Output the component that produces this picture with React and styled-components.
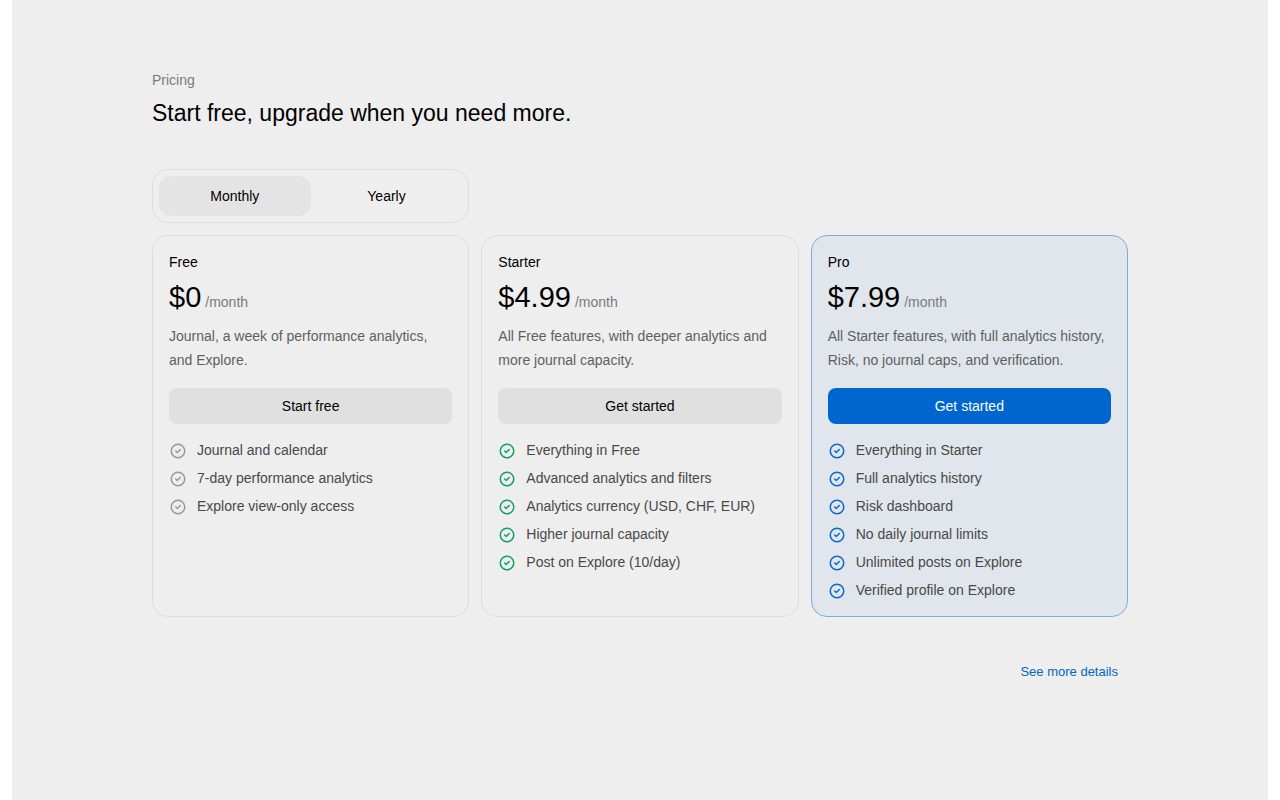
import { useState } from 'react';
import styled, { createGlobalStyle } from 'styled-components';

const GlobalStyle = createGlobalStyle`
  * {
    box-sizing: border-box;
  }

  body {
    margin: 0;
    background: #ffffff;
    color: #000000;
    font-family: "Liberation Sans", Arial, sans-serif;
    font-size: 14px;
    line-height: 20px;
  }

  h1, h2, p, ul {
    margin: 0;
    padding: 0;
    font-weight: 400;
  }

  button {
    font: inherit;
    cursor: pointer;
  }
`;

const Page = styled.main`
  min-height: 100vh;
  margin: 0 12px;
  padding: 70px 24px;
  background: #eeeeee;
`;

const Container = styled.div`
  max-width: 976px;
  margin: 0 auto;
`;

const Header = styled.header`
  display: flex;
  flex-direction: column;
  gap: 8px;
  margin-bottom: 40px;
`;

const Eyebrow = styled.p`
  color: #7b7b7b;
`;

const Title = styled.h1`
  font-size: 23px;
  line-height: 31px;
`;

const Grid = styled.div`
  display: grid;
  grid-template-columns: repeat(3, 1fr);
  gap: 12px;

  @media (max-width: 860px) {
    grid-template-columns: 1fr;
  }
`;

const Toggle = styled.div`
  display: flex;
  padding: 6px;
  border: 1px solid #dddddd;
  border-radius: 16px;
`;

const ToggleButton = styled.button`
  flex: 1;
  height: 40px;
  border: none;
  border-radius: 12px;
  background: ${({ $active }) => ($active ? '#e4e4e4' : 'transparent')};
  color: #000000;
`;

const Cards = styled(Grid)`
  margin-top: 12px;
`;

const Card = styled.article`
  padding: 16px;
  border: 1px solid ${({ $featured }) => ($featured ? '#7eacda' : '#dddddd')};
  border-radius: 16px;
  background: ${({ $featured }) => ($featured ? '#e0e6eb' : 'transparent')};
`;

const PlanName = styled.h2`
  font-size: 14px;
  line-height: 20px;
`;

const PriceRow = styled.p`
  display: flex;
  align-items: baseline;
  gap: 4px;
  margin-top: 8px;
`;

const Price = styled.span`
  font-size: 29px;
  line-height: 34px;
`;

const Period = styled.span`
  color: #7b7b7b;
`;

const Description = styled.p`
  margin-top: 10px;
  color: #5f5f5f;
  line-height: 24px;
`;

const PlanButton = styled.button`
  width: 100%;
  height: 36px;
  margin: 16px 0;
  border: none;
  border-radius: 8px;
  background: ${({ $featured }) => ($featured ? '#0066cf' : '#e0e0e0')};
  color: ${({ $featured }) => ($featured ? '#ffffff' : '#000000')};
`;

const Features = styled.ul`
  display: flex;
  flex-direction: column;
  gap: 8px;
  list-style: none;
`;

const Feature = styled.li`
  display: flex;
  gap: 10px;
  color: #484848;
`;

const CheckIcon = styled.svg`
  flex-shrink: 0;
  width: 18px;
  height: 18px;
  margin-top: 2px;
  fill: none;
  stroke: ${({ $color }) => $color};
  stroke-width: 2;
  stroke-linecap: round;
  stroke-linejoin: round;
`;

const Footer = styled.footer`
  display: flex;
  justify-content: flex-end;
  margin-top: 45px;
  padding: 0 10px;
`;

const DetailsLink = styled.a`
  color: #0066bf;
  font-size: 13px;
  text-decoration: none;

  &:hover {
    text-decoration: underline;
  }
`;

const plans = [
  {
    name: 'Free',
    price: '$0',
    description: 'Journal, a week of performance analytics, and Explore.',
    action: 'Start free',
    color: '#999999',
    features: ['Journal and calendar', '7-day performance analytics', 'Explore view-only access'],
  },
  {
    name: 'Starter',
    price: '$4.99',
    description: 'All Free features, with deeper analytics and more journal capacity.',
    action: 'Get started',
    color: '#109f65',
    features: [
      'Everything in Free',
      'Advanced analytics and filters',
      'Analytics currency (USD, CHF, EUR)',
      'Higher journal capacity',
      'Post on Explore (10/day)',
    ],
  },
  {
    name: 'Pro',
    price: '$7.99',
    description: 'All Starter features, with full analytics history, Risk, no journal caps, and verification.',
    action: 'Get started',
    color: '#0b69cc',
    featured: true,
    features: [
      'Everything in Starter',
      'Full analytics history',
      'Risk dashboard',
      'No daily journal limits',
      'Unlimited posts on Explore',
      'Verified profile on Explore',
    ],
  },
];

const PlanCard = ({ plan }) => (
  <Card $featured={plan.featured}>
    <PlanName>{plan.name}</PlanName>
    <PriceRow>
      <Price>{plan.price}</Price>
      <Period>/month</Period>
    </PriceRow>
    <Description>{plan.description}</Description>
    <PlanButton type="button" $featured={plan.featured}>{plan.action}</PlanButton>
    <Features>
      {plan.features.map((feature) => (
        <Feature key={feature}>
          <CheckIcon viewBox="0 0 24 24" $color={plan.color} aria-hidden="true">
            <circle cx="12" cy="12" r="9" />
            <path d="M9 12l2 2l4 -4" />
          </CheckIcon>
          {feature}
        </Feature>
      ))}
    </Features>
  </Card>
);

const App = () => {
  const [billing, setBilling] = useState('Monthly');

  return (
    <>
      <GlobalStyle />
      <Page>
        <Container>
          <Header>
            <Eyebrow>Pricing</Eyebrow>
            <Title>Start free, upgrade when you need more.</Title>
          </Header>
          <Grid>
            <Toggle role="group" aria-label="Billing period">
              {['Monthly', 'Yearly'].map((option) => (
                <ToggleButton
                  key={option}
                  type="button"
                  $active={billing === option}
                  aria-pressed={billing === option}
                  onClick={() => setBilling(option)}
                >
                  {option}
                </ToggleButton>
              ))}
            </Toggle>
          </Grid>
          <Cards>
            {plans.map((plan) => (
              <PlanCard key={plan.name} plan={plan} />
            ))}
          </Cards>
          <Footer>
            <DetailsLink href="#details">See more details</DetailsLink>
          </Footer>
        </Container>
      </Page>
    </>
  );
};

export default App;
